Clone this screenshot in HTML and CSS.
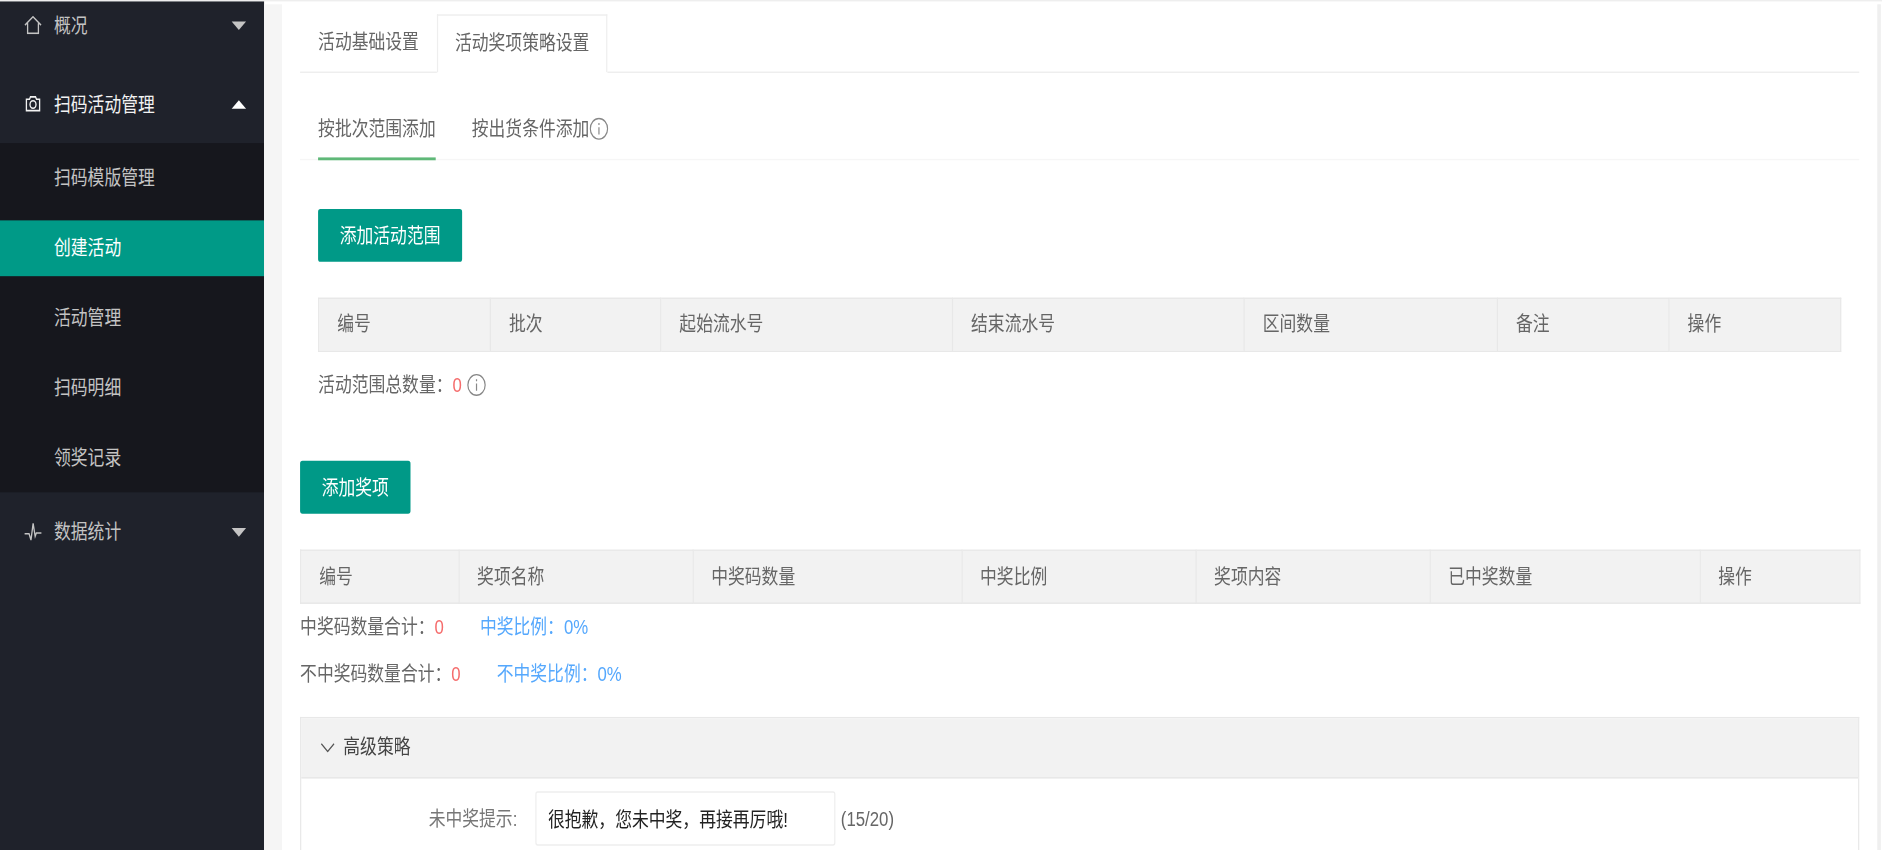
FILE: index.html
```html
<!DOCTYPE html>
<html lang="zh-CN">
<head>
<meta charset="utf-8">
<title>创建活动</title>
<link rel="stylesheet" href="styles.css">
</head>
<body>
<div class="stage">
  <aside class="sidebar">
    <nav class="menu">
      <a class="menu-row">
        <svg class="menu-icon" viewBox="0 0 15 13"><path d="M.8 6.6 7.5.7l6.7 5.9M3 5.2v7.1h9V5.2"/></svg>
        <span class="menu-label">概况</span><i class="caret caret-down"></i>
      </a>
      <a class="menu-row menu-row-open">
        <svg class="menu-icon" viewBox="0 0 15 11"><path d="M2 2.4h2.6L5.4.7h4.2l.8 1.7H13v7.9H2z"/><ellipse cx="7.5" cy="6" rx="2.5" ry="2.6"/></svg>
        <span class="menu-label">扫码活动管理</span><i class="caret caret-up"></i>
      </a>
      <div class="submenu">
        <a class="submenu-item">扫码模版管理</a>
        <a class="submenu-item submenu-item-active">创建活动</a>
        <a class="submenu-item">活动管理</a>
        <a class="submenu-item">扫码明细</a>
        <a class="submenu-item">领奖记录</a>
      </div>
      <a class="menu-row">
        <svg class="menu-icon" viewBox="0 0 15 13"><path d="M.5 8h3.7l1.6 4.4L7.6.8l1.7 9 1-2.3h4.2"/></svg>
        <span class="menu-label">数据统计</span><i class="caret caret-down"></i>
      </a>
    </nav>
  </aside>
  <div class="gutter"></div>
  <main class="content">
    <ul class="tabs">
      <li class="tab">活动基础设置</li>
      <li class="tab tab-active">活动奖项策略设置</li>
    </ul>
    <div class="subtabs">
      <span class="subtab subtab-active">按批次范围添加</span>
      <span class="subtab">按出货条件添加<svg class="info" viewBox="0 0 16 16"><circle cx="8" cy="8" r="7.2"/><path d="M8 7v5M8 4v1.4"/></svg></span>
    </div>
    <section class="range">
      <button class="btn" type="button">添加活动范围</button>
      <table class="grid grid-range">
        <colgroup><col class="r1"><col class="r2"><col class="r3"><col class="r4"><col class="r5"><col class="r6"><col class="r7"></colgroup>
        <thead><tr><th>编号</th><th>批次</th><th>起始流水号</th><th>结束流水号</th><th>区间数量</th><th>备注</th><th>操作</th></tr></thead>
      </table>
      <p class="summary summary-range">活动范围总数量：<em class="num">0</em><svg class="info info-after" viewBox="0 0 16 16"><circle cx="8" cy="8" r="7.2"/><path d="M8 7v5M8 4v1.4"/></svg></p>
    </section>
    <button class="btn btn-prize" type="button">添加奖项</button>
    <table class="grid grid-prize">
      <colgroup><col class="p1"><col class="p2"><col class="p3"><col class="p4"><col class="p5"><col class="p6"><col class="p7"></colgroup>
      <thead><tr><th>编号</th><th>奖项名称</th><th>中奖码数量</th><th>中奖比例</th><th>奖项内容</th><th>已中奖数量</th><th>操作</th></tr></thead>
    </table>
    <div class="totals">
      <p class="summary">中奖码数量合计：<em class="num">0</em><span class="ratio">中奖比例：0%</span></p>
      <p class="summary">不中奖码数量合计：<em class="num">0</em><span class="ratio">不中奖比例：0%</span></p>
    </div>
    <section class="collapse">
      <h2 class="collapse-title">
        <svg class="chevron" viewBox="0 0 12 7"><path d="M.7.7 6 6.2 11.3.7"/></svg>高级策略
      </h2>
      <div class="collapse-body">
        <div class="field">
          <label class="field-label" for="tip">未中奖提示:</label>
          <input class="field-input" id="tip" type="text" value="很抱歉，您未中奖，再接再厉哦!">
          <span class="field-count">(15/20)</span>
        </div>
      </div>
    </section>
  </main>
  <div class="scrollbar"></div>
</div>
</body>
</html>
```
FILE: styles.css
```css
* { box-sizing: border-box; }

html, body {
  margin: 0;
  width: 100%;
  height: 100%;
  overflow: hidden;
  background: #fff;
}

.stage {
  display: flex;
  width: 1568px;
  height: 594px;
  overflow: hidden;
  transform: scale(1.2003, 1.431);
  transform-origin: 0 0;
  font: 14px/20px "Liberation Sans", "Noto Sans CJK SC", sans-serif;
  color: #666;
  border-top: 1px solid #eee;
}

.sidebar {
  flex: none;
  width: 220px;
  margin-top: -1px;
  background: #1f222b;
  border-top: 1px solid #55575c;
  overflow: hidden;
}

.menu { margin-top: -11px; }

.menu-row {
  display: flex;
  align-items: center;
  height: 55px;
  padding: 0 15px 0 20px;
  color: #c4c4c4;
}

.menu-row-open { color: #f2f2f2; }

.menu-icon {
  flex: none;
  width: 15px;
  height: 13px;
  margin-right: 10px;
  fill: none;
  stroke: currentColor;
  stroke-width: 1.1;
}

.menu-label { flex: 1; }

.caret {
  width: 0;
  height: 0;
  border-left: 6px solid transparent;
  border-right: 6px solid transparent;
}

.caret-down { border-top: 6px solid #c4c4c4; }
.caret-up { border-bottom: 6px solid #fff; }

.submenu {
  display: flex;
  flex-direction: column;
  gap: 10px;
  padding: 4.5px 0;
  background: #16171d;
}

.submenu-item {
  height: 39px;
  padding-left: 45px;
  line-height: 38px;
  color: #c4c4c4;
}

.submenu-item-active {
  background: #009a87;
  color: #fff;
}

.gutter {
  flex: none;
  width: 15px;
  margin-top: 2px;
  background: #f5f5f5;
}

.content {
  flex: none;
  width: 1329px;
  padding: 9px 15px 0;
}

.tabs {
  display: flex;
  height: 40.5px;
  margin: 0;
  padding: 0;
  list-style: none;
  border-bottom: 1px solid #eee;
}

.tab {
  height: 40.5px;
  padding: 0 15px;
  line-height: 38px;
}

.tab-active {
  padding: 0 14px;
  background: #fff;
  border: 1px solid #eee;
  border-bottom-color: #fff;
}

.subtabs {
  display: flex;
  gap: 30px;
  height: 41px;
  margin-top: 20.5px;
  padding-left: 15px;
  border-bottom: 1px solid #f6f6f6;
}

.subtab {
  display: flex;
  align-items: center;
  height: 41px;
  padding-bottom: 2px;
  border-bottom: 2px solid transparent;
}

.subtab-active { border-bottom-color: #5fb878; }

.info {
  flex: none;
  width: 16px;
  height: 16px;
  fill: none;
  stroke: #888;
  stroke-width: 1;
}

.info-after {
  margin-left: 4px;
  vertical-align: -3px;
}

.range { padding: 0 15px; }

.btn {
  display: block;
  height: 37px;
  padding: 0 18px;
  border: 0;
  border-radius: 2px;
  background: #009987;
  color: #fff;
  font: inherit;
}

.range .btn { margin-top: 34px; }

.btn-prize { margin-top: 37.3px; }

.grid {
  width: 100%;
  table-layout: fixed;
  border-collapse: collapse;
}

.grid-range { margin-top: 24.5px; }
.grid-prize { margin-top: 25px; }

.grid th {
  height: 37px;
  padding: 0 15px 1px;
  background: #f2f2f2;
  border: 1px solid #e8e8e8;
  color: #666;
  font-weight: 400;
  text-align: left;
}

.r1, .r6, .r7 { width: 143px; }
.r2 { width: 142px; }
.r3, .r4 { width: 243px; }
.r5 { width: 211px; }

.p1 { width: 131.5px; }
.p7 { width: 133px; }
.p2, .p4, .p5 { width: 195px; }
.p3 { width: 224px; }
.p6 { width: 225px; }

.summary {
  margin: 0;
  line-height: 32.5px;
}

.summary-range {
  margin-top: 7.5px;
  line-height: 32px;
}

.totals { margin-top: -0.3px; }

.num {
  color: #f56c6c;
  font-style: normal;
}

.ratio {
  margin-left: 30px;
  color: #55a8fd;
}

.collapse {
  margin-top: 14.3px;
  height: 120px;
  border: 1px solid #e8e8e8;
  border-bottom: 0;
}

.collapse-title {
  display: flex;
  align-items: center;
  height: 41.5px;
  margin: 0;
  padding: 0 0 1px 16px;
  background: #f2f2f2;
  border-bottom: 1px solid #e8e8e8;
  color: #444;
  font-size: 14px;
  font-weight: 400;
}

.chevron {
  width: 12px;
  height: 7px;
  margin-right: 7px;
  fill: none;
  stroke: #555;
  stroke-width: 1;
}

.collapse-body { padding-top: 9px; }

.field {
  display: flex;
  align-items: center;
  height: 38px;
}

.field-label {
  width: 180px;
  text-align: right;
  color: #777;
}

.field-input {
  width: 250.5px;
  height: 38px;
  margin-left: 14.5px;
  padding: 0 10px;
  background: #fff;
  border: 1px solid #eee;
  border-radius: 2px;
  color: #222;
  font: inherit;
  outline: 0;
}

.field-count { margin-left: 4.5px; }

.scrollbar {
  flex: none;
  width: 2.5px;
  margin-top: 2px;
  background: #efefef;
}
```
